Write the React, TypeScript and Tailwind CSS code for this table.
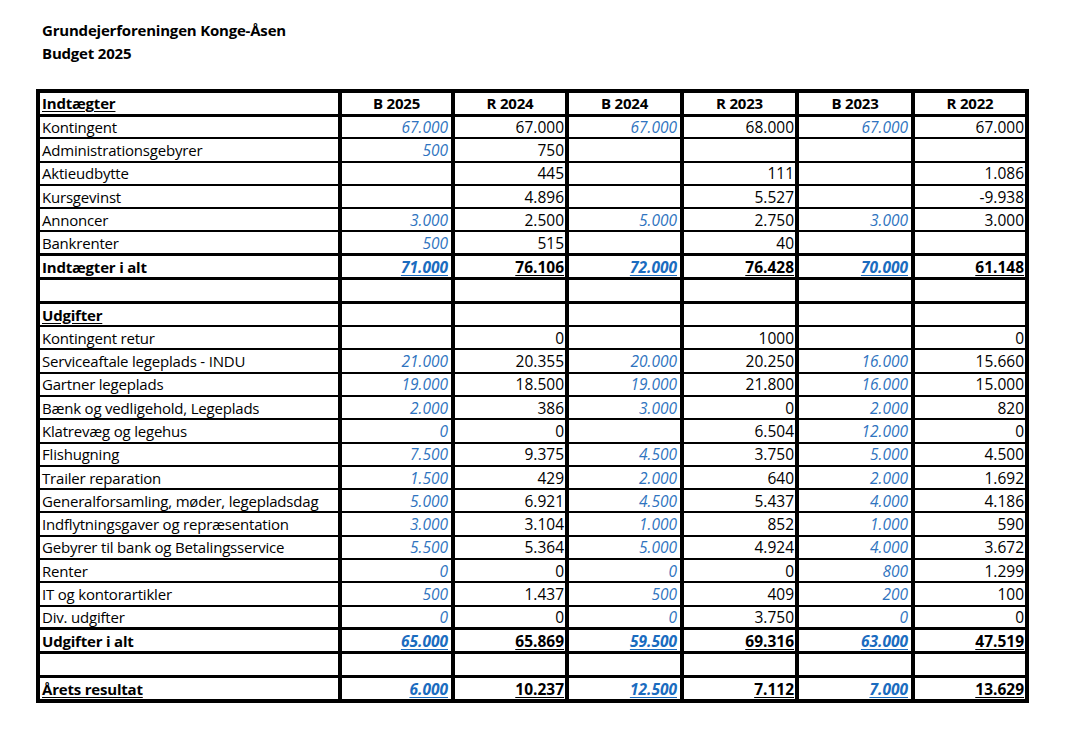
type Row = {
  label: string;
  values?: string[];
  kind?: "head" | "item" | "total" | "blank" | "section" | "result";
};

const rows: Row[] = [
  { label: "Kontingent", values: ["67.000", "67.000", "67.000", "68.000", "67.000", "67.000"] },
  { label: "Administrationsgebyrer", values: ["500", "750", "", "", "", ""] },
  { label: "Aktieudbytte", values: ["", "445", "", "111", "", "1.086"] },
  { label: "Kursgevinst", values: ["", "4.896", "", "5.527", "", "-9.938"] },
  { label: "Annoncer", values: ["3.000", "2.500", "5.000", "2.750", "3.000", "3.000"] },
  { label: "Bankrenter", values: ["500", "515", "", "40", "", ""] },
  { label: "Indtægter i alt", values: ["71.000", "76.106", "72.000", "76.428", "70.000", "61.148"], kind: "total" },
  { label: "", kind: "blank" },
  { label: "Udgifter", kind: "section" },
  { label: "Kontingent retur", values: ["", "0", "", "1000", "", "0"] },
  { label: "Serviceaftale legeplads - INDU", values: ["21.000", "20.355", "20.000", "20.250", "16.000", "15.660"] },
  { label: "Gartner legeplads", values: ["19.000", "18.500", "19.000", "21.800", "16.000", "15.000"] },
  { label: "Bænk og vedligehold, Legeplads", values: ["2.000", "386", "3.000", "0", "2.000", "820"] },
  { label: "Klatrevæg og legehus", values: ["0", "0", "", "6.504", "12.000", "0"] },
  { label: "Flishugning", values: ["7.500", "9.375", "4.500", "3.750", "5.000", "4.500"] },
  { label: "Trailer reparation", values: ["1.500", "429", "2.000", "640", "2.000", "1.692"] },
  { label: "Generalforsamling, møder, legepladsdag", values: ["5.000", "6.921", "4.500", "5.437", "4.000", "4.186"] },
  { label: "Indflytningsgaver og repræsentation", values: ["3.000", "3.104", "1.000", "852", "1.000", "590"] },
  { label: "Gebyrer til bank og Betalingsservice", values: ["5.500", "5.364", "5.000", "4.924", "4.000", "3.672"] },
  { label: "Renter", values: ["0", "0", "0", "0", "800", "1.299"] },
  { label: "IT og kontorartikler", values: ["500", "1.437", "500", "409", "200", "100"] },
  { label: "Div. udgifter", values: ["0", "0", "0", "3.750", "0", "0"] },
  { label: "Udgifter i alt", values: ["65.000", "65.869", "59.500", "69.316", "63.000", "47.519"], kind: "total" },
  { label: "", kind: "blank" },
  { label: "Årets resultat", values: ["6.000", "10.237", "12.500", "7.112", "7.000", "13.629"], kind: "result" },
];

const columns = ["B 2025", "R 2024", "B 2024", "R 2023", "B 2023", "R 2022"];

const NumberCell = ({ value, budget, bold }: { value: string; budget: boolean; bold: boolean }) => {
  if (!value) return <td className="border-x-4 border-black"></td>;
  const color = budget ? (bold ? "text-[#1b6cbf]" : "text-[#2f74c0]") : "text-black";
  return (
    <td
      className={`border-x-4 border-black text-right text-[15.5px] tracking-normal ${
        budget ? "pr-[3px]" : "pr-[1px]"
      } ${color}`}
    >
      <span className={`${budget ? "italic" : ""} ${bold ? "font-bold underline underline-offset-2" : ""}`}>
        {value}
      </span>
    </td>
  );
};

export default function App() {
  return (
    <div className="bg-white min-h-[743px] text-black text-[15px]" style={{ fontFamily: "'Open Sans', Lato, sans-serif" }}>
      <div className="pl-[42px] pt-[19px] font-bold leading-[23px] tracking-[-0.2px]">
        <div>Grundejerforeningen Konge-Åsen</div>
        <div>Budget 2025</div>
      </div>

      <table className="ml-[36px] mt-[24px] w-[993px] table-fixed border-collapse border-4 border-black leading-[18px] tracking-[-0.2px]">
        <colgroup>
          <col className="w-[302px]" />
          <col className="w-[113px]" />
          <col className="w-[114px]" />
          <col className="w-[115px]" />
          <col className="w-[115px]" />
          <col className="w-[116px]" />
          <col className="w-[114px]" />
        </colgroup>
        <thead>
          <tr className="h-[24px] border-y-[3px] border-black">
            <th className="border-x-4 border-black text-left pl-[2px] font-bold underline underline-offset-2">
              Indtægter
            </th>
            {columns.map((c) => (
              <th key={c} className="border-x-4 border-black text-center font-bold">
                {c}
              </th>
            ))}
          </tr>
        </thead>
        <tbody>
          {rows.map((row, i) => {
            const kind = row.kind ?? "item";
            const thick = kind === "total" || kind === "result" || kind === "blank";
            const height = thick ? "h-[24px]" : "h-[23.3px]";
            const rowBorder = thick ? "border-y-[3px]" : "border-y-2";
            const bold = kind === "total" || kind === "result";
            return (
              <tr key={i} className={`${height} ${rowBorder} border-black`}>
                <td
                  className={`border-x-4 border-black pl-[2px] whitespace-nowrap ${
                    bold ? "font-bold" : ""
                  } ${kind === "section" || kind === "result" ? "font-bold underline underline-offset-2" : ""}`}
                >
                  {row.label}
                </td>
                {columns.map((c, j) => (
                  <NumberCell key={c} value={row.values?.[j] ?? ""} budget={j % 2 === 0} bold={bold} />
                ))}
              </tr>
            );
          })}
        </tbody>
      </table>
    </div>
  );
}
